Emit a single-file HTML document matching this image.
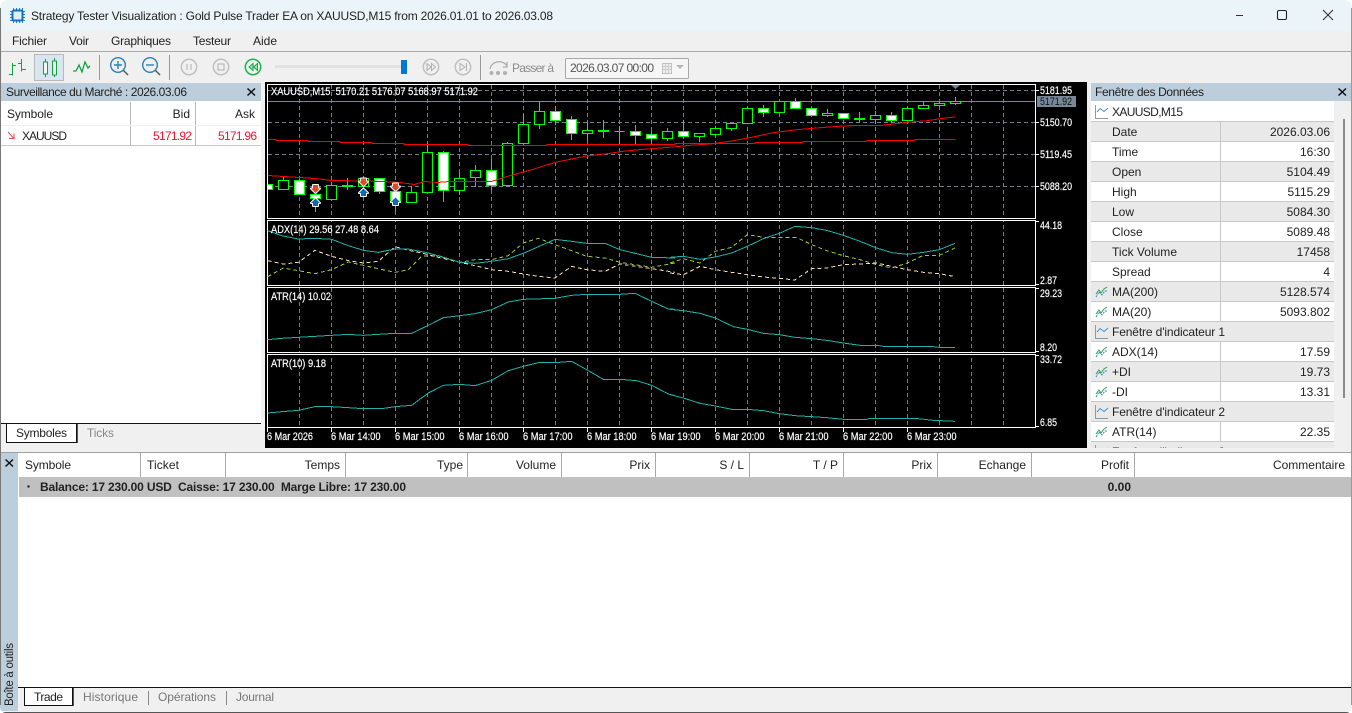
<!DOCTYPE html>
<html><head><meta charset="utf-8"><title>Strategy Tester Visualization</title>
<style>
html,body{margin:0;padding:0;width:1352px;height:713px;overflow:hidden;background:#fff}
svg{display:block}
text{font-family:"Liberation Sans",sans-serif;font-size:12px;fill:#222}
.e{text-anchor:end}
.c text{font-size:11px;fill:#fff;stroke:#fff;stroke-width:.2}
.k{shape-rendering:crispEdges;fill:none}
.z{fill:none;stroke-width:1;vector-effect:non-scaling-stroke;shape-rendering:crispEdges}
.z *{vector-effect:non-scaling-stroke}
.ar{paint-order:stroke;stroke:#fff;stroke-width:2;stroke-linejoin:round}
</style></head><body>
<svg width="1352" height="713" viewBox="0 0 1352 713" xmlns="http://www.w3.org/2000/svg">
<defs>
<g id="ci"><path d="M.5-7V6.5H13" fill="none" stroke="#8a9aa8"/><path d="M2 0L5-3.5L9-.5L13-4" fill="none" stroke="#4a90c8"/></g>
<g id="ma" fill="none"><path d="M1 2L4-2L6 1L9-3L12-5" stroke="#2aa84a"/><path d="M1 5L4 0L7 3L10-1L12-1" stroke="#3a80c8" stroke-dasharray="2 1"/></g>
</defs>
<!-- window chrome -->
<rect width="1352" height="713" fill="#f0f0f0"/>
<rect y="0" width="1352" height="31" fill="#ebf4f8"/>
<rect x="0" y="51" width="1352" height="1" fill="#a8a8a8"/>
<g transform="translate(10,8)">
<path d="M3.500 0V15M6.500 0V15M9.500 0V15M12.500 0V15M0 3.500H15M0 6.500H15M0 9.500H15M0 12.500H15" stroke="#1f7fd0" fill="none"/>
<rect x="2.500" y="2.500" width="10" height="10" rx="1.500" fill="#dff0fb" stroke="#1270c4" stroke-width="2"/>
</g>
<text x="31" y="20" textLength="522">Strategy Tester Visualization : Gold Pulse Trader EA on XAUUSD,M15 from 2026.01.01 to 2026.03.08</text>
<path d="M1236 15.500H1243" stroke="#333"/>
<rect x="1277.500" y="10.500" width="9" height="9" rx="1.500" fill="none" stroke="#222" stroke-width="1.100"/>
<path d="M1323 10L1333 20M1333 10L1323 20" stroke="#333" stroke-width="1.100"/>
<text x="12" y="45" textLength="35">Fichier</text>
<text x="69" y="45" textLength="20">Voir</text>
<text x="111" y="45" textLength="60">Graphiques</text>
<text x="193" y="45" textLength="38">Testeur</text>
<text x="253" y="45" textLength="24">Aide</text>
<!-- toolbar -->
<rect x="34.500" y="54.500" width="29" height="26" fill="#d8e6f2" stroke="#b8b8b8"/>
<g fill="none" stroke="#12a040" stroke-width="1.400" shape-rendering="crispEdges">
<path d="M12.500 63V75.500M9 74.500H12.500M12.500 65.500H16M21.500 59V71.500M18 63.500H21.500M21.500 69.500H26"/>
<rect x="43.500" y="62" width="4" height="12" fill="#f0f8f0" stroke-width="1"/><path d="M45.500 59V62M45.500 74V77M54.500 58V61M54.500 75V77" stroke-width="1"/>
<rect x="52.500" y="61" width="4" height="14" fill="#f0f8f0" stroke-width="1"/>
</g>
<path d="M73 71H76L79 65L82 72L85 62L88 68L90 66" fill="none" stroke="#12a040" stroke-width="1.300"/>
<path d="M99.500 55V80M169.500 55V80M480.500 55V80" stroke="#999"/>
<g fill="none" stroke="#2a7fb5" stroke-width="1.400">
<circle cx="118" cy="65" r="7.300"/><path d="M123.500 70.500L128 75" stroke="#555"/><path d="M114 65H122M118 61V69"/>
<circle cx="150" cy="65" r="7.300"/><path d="M155.500 70.500L160 75" stroke="#555"/><path d="M146 65H154"/>
</g>
<g fill="none" stroke="#c0c0c0" stroke-width="1.500">
<circle cx="189" cy="67" r="7.700"/><path d="M187 64V70M191 64V70" stroke="#b0b0b0" stroke-width="1"/>
<circle cx="221" cy="67" r="7.700"/><rect x="218" y="64" width="6" height="6" stroke="#b0b0b0" stroke-width="1"/>
<circle cx="431" cy="67" r="7.700"/><path d="M427 63.500L431 67L427 70.500ZM431.500 63.500L435.500 67L431.500 70.500Z" stroke="#b0b0b0" stroke-width="1"/>
<circle cx="463" cy="67" r="7.700"/><path d="M460 63.500L465 67L460 70.500ZM466.500 63V71" stroke="#b0b0b0" stroke-width="1"/>
</g>
<circle cx="253" cy="67" r="7.700" fill="#e8f8ec" stroke="#20b050" stroke-width="1.500"/>
<path d="M253 63.500L249 67L253 70.500ZM257.500 63.500L253.500 67L257.500 70.500Z" fill="#a8e0b8" stroke="#20a048"/>
<rect x="275" y="65" width="128" height="3" fill="#e2e2e2"/>
<rect x="401" y="60" width="6" height="14" fill="#0078d7"/>
<g fill="#b0b0b0"><circle cx="491.500" cy="73" r="2"/><circle cx="498" cy="73" r="2"/><circle cx="505" cy="73" r="2"/></g>
<path d="M490 69C491 61 503 59 507 66M507 62V67H503" fill="none" stroke="#aaa" stroke-width="1.200"/>
<text x="512" y="72" textLength="42" style="fill:#8a8a8a">Passer à</text>
<rect x="565.500" y="58.500" width="123" height="20" rx="1" fill="#f6f6f6" stroke="#a8a8a8"/>
<text x="570" y="72" textLength="84" style="fill:#555">2026.03.07 00:00</text>
<rect x="662.500" y="63.500" width="9" height="10" fill="#eee" stroke="#c0c0c0"/><path d="M663 66.500H671M663 69.500H671M665.500 64V73M668.500 64V73" stroke="#ccc"/>
<path d="M676 65H684L680 69Z" fill="#b8b8b8"/>

<!-- market watch -->
<rect x="0" y="83" width="261" height="18" fill="#bccddb"/>
<text x="6" y="96" textLength="181">Surveillance du Marché : 2026.03.06</text>
<path d="M247.500 88.500L255 95.500M255 88.500L247.500 95.500" stroke="#111" stroke-width="1.500"/>
<rect x="0" y="101" width="261" height="322" fill="#fff"/>
<path d="M130.500 102V145M195.500 102V145" stroke="#b8b8b8"/>
<path d="M0 125.500H261" stroke="#f0f0f0"/>
<path d="M0 145.500H261" stroke="#c8c8c8"/>
<text x="7" y="118" textLength="46">Symbole</text>
<text x="190" y="118" class="e">Bid</text>
<text x="255" y="118" class="e">Ask</text>
<path d="M8 132L13.500 138M9 138.500H14V133.500" fill="none" stroke="#e84a4a"/>
<text x="22" y="140" textLength="45">XAUUSD</text>
<text x="192" y="140" class="e" style="fill:#f01030" textLength="39">5171.92</text>
<text x="257" y="140" class="e" style="fill:#f01030" textLength="39">5171.96</text>
<rect x="0" y="423" width="261" height="1" fill="#111"/>
<path d="M6.500 424V442.500H76.500V424" fill="#fff" stroke="#111"/>
<path d="M77.500 424V443" stroke="#555"/>
<text x="16" y="437" textLength="51">Symboles</text>
<text x="87" y="437" textLength="27" style="fill:#888">Ticks</text>

<!-- chart -->
<rect x="265" y="82" width="822" height="366" fill="#000"/>
<g class="k">
<path stroke="#708090" stroke-dasharray="4 3" d="M299.500 85V427M331.500 85V427M363.500 85V427M395.500 85V427M427.500 85V427M459.500 85V427M491.500 85V427M523.500 85V427M555.500 85V427M587.500 85V427M619.500 85V427M651.500 85V427M683.500 85V427M715.500 85V427M747.500 85V427M779.500 85V427M811.500 85V427M843.500 85V427M875.500 85V427M907.500 85V427M939.500 85V427M971.500 85V427M1003.500 85V427"/>
<path stroke="#708090" stroke-dasharray="4 3" d="M268 90.500H1035M268 122.500H1035M268 154.500H1035M268 186.500H1035"/>
<rect x="266" y="219" width="771" height="1" fill="#000"/><rect x="266" y="286" width="771" height="1" fill="#000"/><rect x="266" y="353" width="771" height="1" fill="#000"/>
<path stroke="#778899" d="M268 101.500H1035"/>
<!-- wicks -->
<path stroke="#00ff00" d="M283.500 177V189M299.500 179V180M315.500 185V212M331.500 182V201M347.500 178V190M363.500 176V190M379.500 178V194M395.500 189V212M411.500 186V192M427.500 143V192M443.500 151V202M459.500 172V195M475.500 165V187M491.500 159V190M507.500 142V187M523.500 114V146M539.500 101V129M555.500 106V125M571.500 116V140M587.500 122V141M603.500 120V138M619.500 126V144M635.500 125V144M651.500 131V145M667.500 128V141M683.500 120V139M699.500 136V142M715.500 126V136M731.500 123V131M747.500 107V124M763.500 105V117M795.500 98V101M811.500 108V116M827.500 109V117M843.500 113V119M859.500 112V122M875.500 111V124M891.500 112V123M907.500 107V120M923.500 101V109M939.500 101V107M955.500 97V105"/>
<!-- hollow bodies -->
<path stroke="#00ff00" fill="#000" d="M278.500 180.500h10v9h-10zM326.500 185.500h10v14h-10zM342.500 185.500h10v1h-10zM358.500 178.500h10v8h-10zM406.500 192.500h10v10h-10zM422.500 152.500h10v40h-10zM454.500 178.500h10v12h-10zM470.500 170.500h10v7h-10zM502.500 143.500h10v42h-10zM518.500 124.500h10v19h-10zM534.500 111.500h10v13h-10zM582.500 130.500h10v3h-10zM598.500 130.500h10v1h-10zM614.500 131.500h10v0h-10zM662.500 131.500h10v7h-10zM694.500 133.500h10v3h-10zM710.500 128.500h10v6h-10zM726.500 123.500h10v5h-10zM742.500 108.500h10v15h-10zM774.500 101.500h10v11h-10zM822.500 113.500h10v2h-10zM854.500 118.500h10v1h-10zM870.500 115.500h10v4h-10zM902.500 108.500h10v12h-10zM918.500 105.500h10v3h-10zM934.500 103.500h10v2h-10zM950.500 101.500h10v2h-10z"/>
<!-- white bodies -->
<path stroke="#00ff00" fill="#fff" d="M267.500 184.500h5v5h-5zM294.500 180.500h10v14h-10zM310.500 194.500h10v4h-10zM374.500 178.500h10v13h-10zM390.500 191.500h10v11h-10zM438.500 152.500h10v38h-10zM486.500 170.500h10v15h-10zM550.500 111.500h10v9h-10zM566.500 119.500h10v14h-10zM630.500 131.500h10v4h-10zM646.500 134.500h10v4h-10zM678.500 131.500h10v5h-10zM758.500 108.500h10v4h-10zM790.500 101.500h10v7h-10zM806.500 108.500h10v7h-10zM838.500 113.500h10v5h-10zM886.500 115.500h10v5h-10z"/>
<!-- red MAs -->
<path stroke="#ff0000" d="M268 139.500H276V140.500H308V141.500H340V142.500H372V143.500H404V144.500H468V145.500H547V144.500H675V143.500H755V142.500H803V141.500H867V140.500H915V139.500H955"/>
<polyline stroke="#ff0000" points="268,175.500 283,176.500 299,177.500 315,178.500 331,180.500 363,181 395,182 404,183 414,184.500 425,181.500 437,182.500 450,181.500 491,181.500 498,179.500 512,175 531,170 545,165.500 557,162 573,158.700 587,156 607,153.700 623,151.300 643,149.300 673,147 690,145.300 710,144 730,141.300 753,137 773,132.700 797,129.700 820,127.700 843,126 860,125.300 882,125.300 893,124 907,122.300 927,120.700 943,118.300 955,117"/>
</g>
<!-- arrows -->
<g fill="#e0482a" class="ar">
<path d="M313 185H318V188.500H320L315.500 193L311 188.500H313Z"/>
<path d="M361 178.500H366V181.500H368L363.500 186L359 181.500H361Z"/>
<path d="M393 183.500H398V186.500H400L395.500 191L391 186.500H393Z"/>
</g>
<g fill="#1468b0" class="ar">
<path d="M313 206H318V203H320L315.500 198.500L311 203H313Z"/>
<path d="M361 196H366V193H368L363.500 188.500L359 193H361Z"/>
<path d="M393 205H398V202H400L395.500 197.500L391 202H393Z"/>
</g>
<path d="M951 85H960L955.500 89Z" fill="#708090"/>
<!-- frames -->
<g class="k" stroke="#fff">
<rect x="267.500" y="84.500" width="768" height="134"/>
<rect x="267.500" y="220.500" width="768" height="65"/>
<rect x="267.500" y="287.500" width="768" height="65"/>
<rect x="267.500" y="354.500" width="768" height="73"/>
<path d="M1036 90.500H1039M1036 122.500H1039M1036 154.500H1039M1036 186.500H1039M1036 221.500H1039M1036 284.500H1039M1036 288.500H1039M1036 351.500H1039M1036 355.500H1039M1036 426.500H1039"/>
<path d="M267.500 428V432M331.500 428V432M395.500 428V432M459.500 428V432M523.500 428V432M587.500 428V432M651.500 428V432M715.500 428V432M779.500 428V432M843.500 428V432M907.500 428V432"/>
</g>
<g transform="translate(265,218) scale(.33333)" class="z">
<polyline stroke="#9acd32" stroke-dasharray="4 3" points="8,176 55,150 100,158 150,167 200,155 250,132 295,142 340,152 390,163 430,155 470,115 520,113 585,133 630,125 680,125 730,113 775,75 820,61 870,80 920,98 965,115 1020,120 1065,133 1160,148 1230,135"/>
<polyline stroke="#ffdead" stroke-dasharray="4 3" points="8,128 55,138 100,133 150,97 200,115 250,128 295,135 340,130 390,86 430,97 470,105 520,118 585,133 630,143 680,155 730,160 775,168 820,175 870,180 920,145 965,155 1020,160 1065,138 1160,152 1230,163"/>
<polyline stroke="#20b2aa" points="8,38 50,53 100,63 150,61 200,64 250,83 295,97 340,103 390,93 430,93 490,105 585,133 630,136 680,130 730,122 775,106 870,64 920,70 965,76 1020,76 1065,95 1160,118 1230,120"/>
<polyline stroke="#20b2aa" points="8,365 50,361 100,358 150,355 200,352 250,349 295,352 340,349 390,346 440,346 490,322 535,299 585,293 630,287 680,275 730,252 775,244 870,241 920,232 965,229 1065,229 1110,226 1160,250 1210,273 1230,274"/>
<polyline stroke="#20b2aa" points="8,585 50,581 100,577 150,566 200,566 250,569 295,572 350,572 390,566 440,562 490,525 535,502 585,499 630,503 680,487 730,458 775,445 820,434 870,434 920,430 965,455 1015,484 1065,484 1115,488 1160,502 1210,528 1230,533"/>
</g>
<g transform="translate(670,218) scale(.33333)" class="z">
<polyline stroke="#9acd32" stroke-dasharray="4 3" points="0,135 40,122 90,135 136,100 185,88 232,50 280,58 328,58 380,58 425,80 470,98 520,113 570,125 620,140 665,150 712,135 760,112 808,112 855,90"/>
<polyline stroke="#ffdead" stroke-dasharray="4 3" points="0,165 40,170 90,145 136,155 185,163 232,170 280,177 328,181 375,186 425,152 470,150 520,140 570,138 620,135 665,145 712,155 760,163 808,167 855,176"/>
<polyline stroke="#20b2aa" points="0,118 40,115 90,124 136,117 185,105 232,85 280,62 328,46 375,25 425,29 470,37 520,52 570,70 620,90 665,104 712,109 760,103 808,95 855,76"/>
<polyline stroke="#20b2aa" points="0,274 40,278 90,286 136,300 190,326 232,334 280,346 328,350 375,358 425,362 470,367 520,375 570,382 620,382 640,385 780,385 808,388 855,388"/>
<polyline stroke="#20b2aa" points="0,530 40,540 90,556 136,564 185,574 232,574 280,578 328,587 375,593 425,596 470,599 520,604 590,604 600,601 735,601 790,607 855,610"/>
</g>
<rect x="1037" y="96" width="39" height="11" fill="#778899"/>
<g class="c">
<text x="271" y="95" textLength="207" lengthAdjust="spacingAndGlyphs" xml:space="preserve">XAUUSD,M15  5170.21 5176.07 5168.97 5171.92</text>
<text x="271" y="233" textLength="108" lengthAdjust="spacingAndGlyphs">ADX(14) 29.56 27.48 8.64</text>
<text x="271" y="300" textLength="60" lengthAdjust="spacingAndGlyphs">ATR(14) 10.02</text>
<text x="271" y="367" textLength="55" lengthAdjust="spacingAndGlyphs">ATR(10) 9.18</text>
<text x="1040" y="94" textLength="32" lengthAdjust="spacingAndGlyphs">5181.95</text>
<text x="1040" y="105" textLength="32" lengthAdjust="spacingAndGlyphs" style="fill:#111;stroke:none">5171.92</text>
<text x="1040" y="126" textLength="32" lengthAdjust="spacingAndGlyphs">5150.70</text>
<text x="1040" y="158" textLength="32" lengthAdjust="spacingAndGlyphs">5119.45</text>
<text x="1040" y="190" textLength="32" lengthAdjust="spacingAndGlyphs">5088.20</text>
<text x="1040" y="229" textLength="22" lengthAdjust="spacingAndGlyphs">44.18</text>
<text x="1040" y="284" textLength="17" lengthAdjust="spacingAndGlyphs">2.87</text>
<text x="1040" y="297" textLength="22" lengthAdjust="spacingAndGlyphs">29.23</text>
<text x="1040" y="351" textLength="17" lengthAdjust="spacingAndGlyphs">8.20</text>
<text x="1040" y="363" textLength="22" lengthAdjust="spacingAndGlyphs">33.72</text>
<text x="1040" y="426" textLength="17" lengthAdjust="spacingAndGlyphs">6.85</text>
<text x="267" y="440" textLength="46" lengthAdjust="spacingAndGlyphs">6 Mar 2026</text>
<text x="331" y="440" textLength="49.500" lengthAdjust="spacingAndGlyphs">6 Mar 14:00</text>
<text x="395" y="440" textLength="49.500" lengthAdjust="spacingAndGlyphs">6 Mar 15:00</text>
<text x="459" y="440" textLength="49.500" lengthAdjust="spacingAndGlyphs">6 Mar 16:00</text>
<text x="523" y="440" textLength="49.500" lengthAdjust="spacingAndGlyphs">6 Mar 17:00</text>
<text x="587" y="440" textLength="49.500" lengthAdjust="spacingAndGlyphs">6 Mar 18:00</text>
<text x="651" y="440" textLength="49.500" lengthAdjust="spacingAndGlyphs">6 Mar 19:00</text>
<text x="715" y="440" textLength="49.500" lengthAdjust="spacingAndGlyphs">6 Mar 20:00</text>
<text x="779" y="440" textLength="49.500" lengthAdjust="spacingAndGlyphs">6 Mar 21:00</text>
<text x="843" y="440" textLength="49.500" lengthAdjust="spacingAndGlyphs">6 Mar 22:00</text>
<text x="907" y="440" textLength="49.500" lengthAdjust="spacingAndGlyphs">6 Mar 23:00</text>
</g>

<!-- data window -->
<rect x="1091" y="83" width="261" height="18" fill="#bccddb"/>
<text x="1095" y="96" textLength="109">Fenêtre des Données</text>
<path d="M1338.500 88.500L1346 95.500M1346 88.500L1338.500 95.500" stroke="#111" stroke-width="1.500"/>
<rect x="1091" y="101" width="243" height="347" fill="#fff"/>
<g fill="#e9e9e9" shape-rendering="crispEdges">
<rect x="1091" y="122" width="243" height="19"/><rect x="1091" y="162" width="243" height="19"/><rect x="1091" y="202" width="243" height="19"/><rect x="1091" y="242" width="243" height="19"/><rect x="1091" y="282" width="243" height="19"/><rect x="1091" y="322" width="243" height="19"/><rect x="1091" y="362" width="243" height="19"/><rect x="1091" y="402" width="243" height="19"/><rect x="1091" y="442" width="243" height="6"/>
</g>
<path shape-rendering="crispEdges" stroke="#c8c8c8" d="M1091 121.500H1334M1091 141.500H1334M1091 161.500H1334M1091 181.500H1334M1091 201.500H1334M1091 221.500H1334M1091 241.500H1334M1091 261.500H1334M1091 281.500H1334M1091 301.500H1334M1091 321.500H1334M1091 341.500H1334M1091 361.500H1334M1091 381.500H1334M1091 401.500H1334M1091 421.500H1334M1091 441.500H1334M1220.500 122V321M1220.500 342V401M1220.500 422V441"/>
<rect x="1343" y="119" width="2" height="279" fill="#8a8a8a"/>
<use href="#ci" x="1095" y="112"/><use href="#ci" x="1095" y="332"/><use href="#ci" x="1095" y="412"/><use href="#ci" x="1095" y="452"/>
<use href="#ma" x="1095" y="292"/><use href="#ma" x="1095" y="312"/><use href="#ma" x="1095" y="352"/><use href="#ma" x="1095" y="372"/><use href="#ma" x="1095" y="392"/><use href="#ma" x="1095" y="432"/>
<text x="1112" y="116" textLength="71">XAUUSD,M15</text>
<text x="1112" y="136">Date</text><text x="1330" y="136" class="e">2026.03.06</text>
<text x="1112" y="156">Time</text><text x="1330" y="156" class="e">16:30</text>
<text x="1112" y="176">Open</text><text x="1330" y="176" class="e">5104.49</text>
<text x="1112" y="196">High</text><text x="1330" y="196" class="e">5115.29</text>
<text x="1112" y="216">Low</text><text x="1330" y="216" class="e">5084.30</text>
<text x="1112" y="236">Close</text><text x="1330" y="236" class="e">5089.48</text>
<text x="1112" y="256" textLength="65">Tick Volume</text><text x="1330" y="256" class="e">17458</text>
<text x="1112" y="276">Spread</text><text x="1330" y="276" class="e">4</text>
<text x="1112" y="296">MA(200)</text><text x="1330" y="296" class="e">5128.574</text>
<text x="1112" y="316">MA(20)</text><text x="1330" y="316" class="e">5093.802</text>
<text x="1112" y="336" textLength="113">Fenêtre d'indicateur 1</text>
<text x="1112" y="356">ADX(14)</text><text x="1330" y="356" class="e">17.59</text>
<text x="1112" y="376">+DI</text><text x="1330" y="376" class="e">19.73</text>
<text x="1112" y="396">-DI</text><text x="1330" y="396" class="e">13.31</text>
<text x="1112" y="416" textLength="113">Fenêtre d'indicateur 2</text>
<text x="1112" y="436">ATR(14)</text><text x="1330" y="436" class="e">22.35</text>
<text x="1112" y="456" textLength="113">Fenêtre d'indicateur 3</text>
<rect x="1091" y="448" width="261" height="4" fill="#f0f0f0"/>
<rect x="1087" y="82" width="4" height="370" fill="#f0f0f0"/>

<!-- toolbox -->
<rect x="0" y="452" width="1352" height="1" fill="#a0a0a0"/>
<rect x="0" y="453" width="18" height="258" fill="#bccddb"/>
<path d="M5.500 459.500L13 466.500M13 459.500L5.500 466.500" stroke="#111" stroke-width="1.500"/>
<text transform="translate(13,706) rotate(-90)" textLength="63" style="font-size:11.500px">Boîte à outils</text>
<rect x="18" y="453" width="1334" height="234" fill="#fff"/>
<rect x="19" y="477" width="1333" height="20" fill="#c0c0c0"/>
<path shape-rendering="crispEdges" stroke="#a8a8a8" d="M140.500 453V477M225.500 453V477M345.500 453V477M467.500 453V477M561.500 453V477M655.500 453V477M749.500 453V477M843.500 453V477M937.500 453V477M1031.500 453V477M1134.500 453V477"/>
<text x="25" y="469" textLength="46">Symbole</text>
<text x="147" y="469" textLength="32">Ticket</text>
<text x="340" y="469" class="e">Temps</text>
<text x="463" y="469" class="e">Type</text>
<text x="556" y="469" class="e">Volume</text>
<text x="650" y="469" class="e">Prix</text>
<text x="744" y="469" class="e">S / L</text>
<text x="838" y="469" class="e">T / P</text>
<text x="932" y="469" class="e">Prix</text>
<text x="1026" y="469" class="e">Echange</text>
<text x="1129" y="469" class="e">Profit</text>
<text x="1345" y="469" class="e">Commentaire</text>
<circle cx="28.500" cy="486.500" r="1.200" fill="#222"/>
<text x="40" y="491" textLength="366" style="font-weight:700" xml:space="preserve">Balance: 17 230.00 USD  Caisse: 17 230.00  Marge Libre: 17 230.00</text>
<text x="1131" y="491" class="e" style="font-weight:700">0.00</text>
<rect x="18" y="687" width="1334" height="1" fill="#111"/>
<path d="M24.500 688V705.500H72.500V688" fill="#fff" stroke="#111"/>
<path d="M73.500 688V706" stroke="#555"/>
<text x="34" y="701" textLength="29">Trade</text>
<text x="83" y="701" textLength="55" style="fill:#777">Historique</text>
<rect x="148" y="691" width="1" height="14" fill="#888"/>
<text x="158" y="701" textLength="58" style="fill:#777">Opérations</text>
<rect x="226" y="691" width="1" height="14" fill="#888"/>
<text x="236" y="701" textLength="38" style="fill:#777">Journal</text>
<path d="M0 712.500H1352" stroke="#555"/>
<path d="M.5 8V705" stroke="#777"/>
<path d="M1351.500 8V705" stroke="#999"/>
<!-- window corners -->
<path d="M0 0H8A8 8 0 0 0 0 8Z" fill="#fff"/><path d="M1352 0H1344A8 8 0 0 1 1352 8Z" fill="#fff"/>
<path d="M0 713H6A6 6 0 0 1 0 707Z" fill="#fff"/><path d="M1352 713H1346A6 6 0 0 0 1352 707Z" fill="#fff"/>
</svg>
</body></html>
